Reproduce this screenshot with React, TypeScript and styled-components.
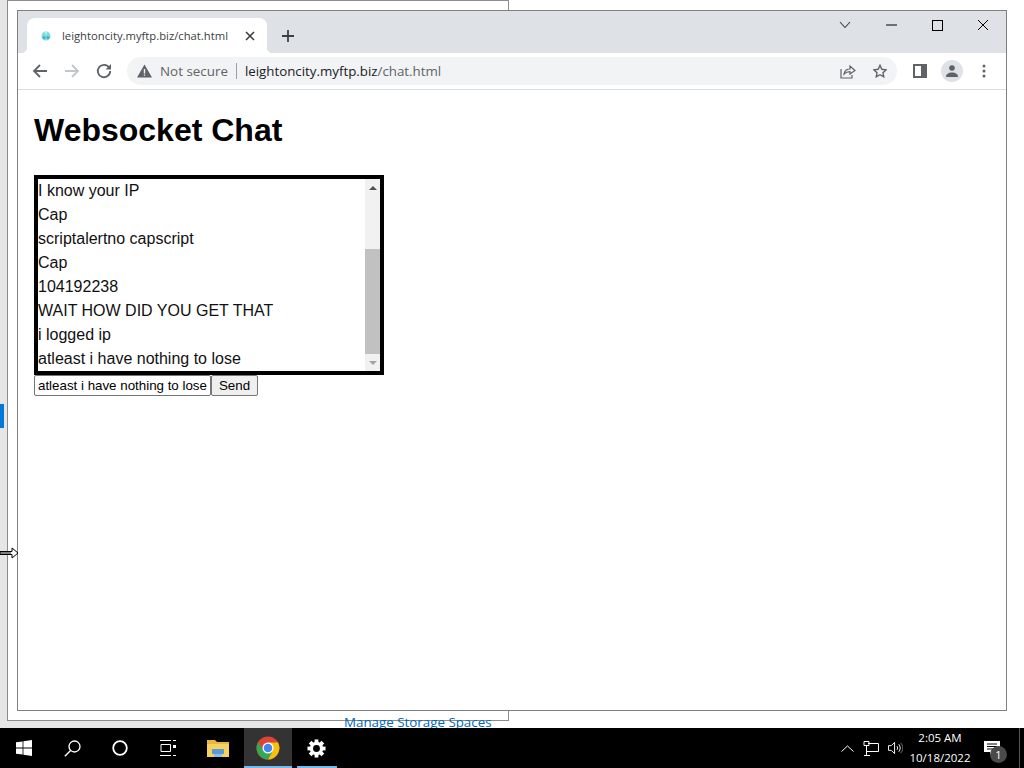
import React from 'react'
import styled, { createGlobalStyle } from 'styled-components'

const GlobalStyle = createGlobalStyle`
  html, body {
    margin: 0;
    padding: 0;
    background: #fff;
    overflow: hidden;
  }
`;

const Screen = styled.div`
  width: 1024px;
  height: 768px;
  display: flex;
  flex-direction: column;
  overflow: hidden;
  font-family: "Liberation Sans", Arial, sans-serif;
`;

const Desktop = styled.div`
  position: relative;
  height: 728px;
  background: #fff;
  overflow: hidden;
`;

const SettingsBehind = styled.div`
  position: absolute;
  left: 0;
  top: 0;
  width: 320px;
  height: 728px;
  background: #e6e6e6;
`;

const SelectedMark = styled.div`
  position: absolute;
  left: 0;
  top: 404px;
  width: 4px;
  height: 24px;
  background: #0078d7;
`;

const BackWindow = styled.div`
  position: absolute;
  left: 7px;
  top: 0;
  width: 500px;
  height: 719px;
  background: #fff;
  border: 1px solid #8c8c8c;
`;

const StorageLink = styled.a`
  position: absolute;
  left: 344px;
  top: 713px;
  font-family: "Open Sans", sans-serif;
  font-size: 13.35px;
  line-height: 18px;
  color: #0067b8;
  white-space: nowrap;
`;

const ChromeWindow = styled.div`
  position: absolute;
  left: 17px;
  top: 10px;
  width: 988px;
  height: 699px;
  background: #fff;
  border: 1px solid #808080;
  display: flex;
  flex-direction: column;
`;

const TabStrip = styled.div`
  height: 42px;
  flex: none;
  background: #dee1e6;
  display: flex;
  padding-left: 9px;
`;

const Tab = styled.div`
  position: relative;
  align-self: flex-end;
  width: 240px;
  height: 35px;
  box-sizing: border-box;
  background: #fff;
  border-radius: 8px 8px 0 0;
  display: flex;
  align-items: center;
  padding-left: 13px;
  &::after {
    content: '';
    position: absolute;
    right: -6px;
    bottom: 0;
    width: 6px;
    height: 6px;
    background: radial-gradient(circle at 100% 0, transparent 6px, #fff 6.5px);
  }
  &::before {
    content: '';
    position: absolute;
    left: -6px;
    bottom: 0;
    width: 6px;
    height: 6px;
    background: radial-gradient(circle at 0 0, transparent 6px, #fff 6.5px);
  }
`;

const TabTitle = styled.span`
  margin-left: 10px;
  width: 183px;
  font-family: "Open Sans", sans-serif;
  font-size: 11.25px;
  line-height: 16px;
  color: #3c4043;
  white-space: nowrap;
`;

const IconSlot = styled.span<{ $w?: number; $h?: number }>`
  flex: none;
  display: inline-flex;
  align-items: center;
  justify-content: center;
  width: ${p => p.$w ?? 28}px;
  height: ${p => p.$h ?? 28}px;
`;

const NewTab = styled(IconSlot)`
  align-self: flex-end;
  margin: 0 0 3px 7px;
`;

const Caption = styled.div`
  margin-left: auto;
  display: flex;
  align-items: center;
  height: 28px;
`;

const TabSearch = styled(IconSlot)`
  margin-right: 7px;
`;

const Toolbar = styled.div`
  height: 37px;
  flex: none;
  box-sizing: border-box;
  border-bottom: 1px solid #dadce0;
  display: flex;
  align-items: center;
  padding: 0 8px;
  gap: 4px;
`;

const Omnibox = styled.div`
  flex: 1;
  height: 28px;
  margin: 0 5px 0 5px;
  padding-left: 8px;
  background: #f1f3f4;
  border-radius: 14px;
  display: flex;
  align-items: center;
`;

const NotSecure = styled.span`
  margin-left: 7px;
  font-family: "Open Sans", sans-serif;
  font-size: 13.4px;
  color: #5f6368;
  white-space: nowrap;
`;

const Divider = styled.span`
  width: 1px;
  height: 16px;
  margin: 0 8px;
  background: #9aa0a6;
`;

const Url = styled.span`
  flex: 1;
  font-family: "Open Sans", sans-serif;
  font-size: 13.3px;
  color: #202124;
  white-space: nowrap;
  span {
    color: #5f6368;
  }
`;

const Avatar = styled.span`
  width: 22px;
  height: 22px;
  border-radius: 50%;
  background: #dee1e6;
  display: inline-flex;
  align-items: center;
  justify-content: center;
`;

const Page = styled.main`
  flex: 1;
  padding: 0 16px;
  color: #000;
`;

const Heading = styled.h1`
  margin: 22px 0 26px;
  font-size: 32px;
  line-height: 37px;
  font-weight: bold;
`;

const ChatBox = styled.div`
  width: 350px;
  height: 200px;
  box-sizing: border-box;
  border: 4px solid #000;
  display: flex;
`;

const Messages = styled.div`
  flex: 1;
  overflow: hidden;
`;

const Message = styled.div`
  height: 24px;
  font-size: 16px;
  line-height: 24px;
  color: #111;
  white-space: nowrap;
`;

const Scrollbar = styled.div`
  width: 15px;
  flex: none;
  background: #f1f1f1;
  display: flex;
  flex-direction: column;
  align-items: center;
`;

const ScrollArrow = styled.div<{ $down?: boolean; $muted?: boolean }>`
  height: 17px;
  flex: none;
  width: 100%;
  display: flex;
  align-items: center;
  justify-content: center;
  &::before {
    content: '';
    border-left: 4px solid transparent;
    border-right: 4px solid transparent;
    border-${p => (p.$down ? 'top' : 'bottom')}: 4px solid ${p => (p.$muted ? '#a3a3a3' : '#505050')};
  }
`;

const Thumb = styled.div`
  width: 100%;
  height: 105px;
  margin-top: 53px;
  background: #c1c1c1;
`;

const SendRow = styled.form`
  display: flex;
  margin: 0;
`;

const MessageInput = styled.input`
  width: 177px;
  height: 21px;
  box-sizing: border-box;
  padding: 1px 3px;
  margin: 0;
  border: 1px solid #767676;
  border-radius: 2px;
  background: #fff;
  color: #000;
  font-family: "Liberation Sans", Arial, sans-serif;
  font-size: 13.33px;
`;

const SendButton = styled.button`
  width: 47px;
  height: 21px;
  box-sizing: border-box;
  padding: 0;
  margin: 0;
  border: 1px solid #767676;
  border-radius: 2px;
  background: #efefef;
  color: #000;
  font-family: "Liberation Sans", Arial, sans-serif;
  font-size: 13.33px;
`;

const ResizeCursor = styled.svg`
  position: absolute;
  left: 0;
  top: 547px;
`;

const Taskbar = styled.footer`
  height: 40px;
  flex: none;
  background: #000;
  display: flex;
  align-items: stretch;
`;

const TaskButton = styled.div<{ $w?: number; $active?: boolean; $open?: boolean }>`
  position: relative;
  width: ${p => p.$w ?? 48}px;
  flex: none;
  display: flex;
  align-items: center;
  justify-content: center;
  background: ${p => (p.$active ? '#333' : 'transparent')};
  &::after {
    content: '';
    display: ${p => (p.$open ? 'block' : 'none')};
    position: absolute;
    left: ${p => (p.$active ? 0 : 5)}px;
    right: ${p => (p.$active ? 0 : 3)}px;
    bottom: 0;
    height: 2px;
    background: #76b9ed;
  }
`;

const Tray = styled.div`
  margin-left: auto;
  display: flex;
  align-items: center;
  color: #fff;
`;

const TrayIcon = styled(IconSlot)`
  height: 40px;
`;

const Clock = styled.div`
  width: 74px;
  text-align: center;
  font-family: "Open Sans", sans-serif;
  font-size: 11.5px;
  line-height: 20px;
  color: #fff;
  white-space: nowrap;
`;

const NotifyButton = styled.div`
  position: relative;
  width: 42px;
  height: 40px;
  display: flex;
  align-items: center;
  justify-content: center;
  padding-right: 12px;
  box-sizing: border-box;
`;

const NotifyBadge = styled.span`
  position: absolute;
  left: 13px;
  top: 18px;
  width: 17px;
  height: 17px;
  border-radius: 50%;
  background: #4a4a4a;
  color: #fff;
  font-family: "Open Sans", sans-serif;
  font-size: 11px;
  line-height: 17px;
  text-align: center;
`;

const ShowDesktop = styled.div`
  width: 4px;
  border-left: 1px solid #555;
  align-self: stretch;
`;

const messages = [
  'I know your IP',
  'Cap',
  'scriptalertno capscript',
  'Cap',
  '104192238',
  'WAIT HOW DID YOU GET THAT',
  'i logged ip',
  'atleast i have nothing to lose',
];

function ChromeLogo() {
  return (
    <svg width="24" height="24" viewBox="0 0 26 26">
      <circle cx="13" cy="13" r="12.5" fill="#db4437" />
      <path d="M13 25.5A12.5 12.5 0 0 0 23.8 7H13l4 7.5z" fill="#f4c20d" />
      <path d="M13 25.5l4.5-8-4.5-1-5-1-5.8-8.6A12.5 12.5 0 0 0 13 25.5z" fill="#34a853" />
      <circle cx="13" cy="13" r="6" fill="#fff" />
      <circle cx="13" cy="13" r="4.6" fill="#4285f4" />
    </svg>
  );
}

function Gear() {
  const teeth = [0, 45, 90, 135];
  return (
    <svg width="19" height="19" viewBox="0 0 20 20">
      {teeth.map(a => (
        <rect key={a} x="8" y="0.5" width="4" height="19" fill="#fff" transform={`rotate(${a} 10 10)`} />
      ))}
      <circle cx="10" cy="10" r="7" fill="#fff" />
      <circle cx="10" cy="10" r="3.6" fill="#000" />
    </svg>
  );
}

export default function App() {
  return (
    <Screen>
      <GlobalStyle />
      <Desktop>
        <SettingsBehind />
        <SelectedMark />
        <BackWindow />
        <StorageLink>Manage Storage Spaces</StorageLink>
        <ChromeWindow>
          <TabStrip>
            <Tab>
              <svg width="12" height="12" viewBox="0 0 12 12">
                <circle cx="6" cy="6" r="4.5" fill="#7fdde0" />
                <circle cx="4" cy="7.5" r="1.6" fill="#35b5c9" />
                <circle cx="8" cy="7.5" r="1.6" fill="#35b5c9" />
                <circle cx="6" cy="3" r="1.1" fill="#c8f2f2" />
              </svg>
              <TabTitle>leightoncity.myftp.biz/chat.html</TabTitle>
              <svg width="10" height="10" viewBox="0 0 10 10">
                <path d="M1 1l8 8M9 1l-8 8" stroke="#3c4043" strokeWidth="1.6" />
              </svg>
            </Tab>
            <NewTab>
              <svg width="14" height="14" viewBox="0 0 14 14">
                <path d="M7 1v12M1 7h12" stroke="#3c4043" strokeWidth="1.8" />
              </svg>
            </NewTab>
            <Caption>
              <TabSearch $w={32}>
                <svg width="12" height="8" viewBox="0 0 12 8">
                  <path d="M1 1l5 5.5L11 1" fill="none" stroke="#3c4043" strokeWidth="1.1" />
                </svg>
              </TabSearch>
              <IconSlot $w={46}>
                <svg width="11" height="2" viewBox="0 0 11 2">
                  <path d="M0 1h11" stroke="#000" strokeWidth="1" />
                </svg>
              </IconSlot>
              <IconSlot $w={46}>
                <svg width="11" height="11" viewBox="0 0 11 11">
                  <rect x="0.5" y="0.5" width="10" height="10" fill="none" stroke="#000" />
                </svg>
              </IconSlot>
              <IconSlot $w={46}>
                <svg width="12" height="12" viewBox="0 0 12 12">
                  <path d="M1 1l10 10M11 1L1 11" stroke="#000" strokeWidth="1" />
                </svg>
              </IconSlot>
            </Caption>
          </TabStrip>
          <Toolbar>
            <IconSlot>
              <svg width="16" height="16" viewBox="0 0 16 16">
                <path d="M15 8H2M8 2L2 8l6 6" fill="none" stroke="#5f6368" strokeWidth="1.8" />
              </svg>
            </IconSlot>
            <IconSlot>
              <svg width="16" height="16" viewBox="0 0 16 16">
                <path d="M1 8h13M8 2l6 6-6 6" fill="none" stroke="#c3c6c9" strokeWidth="1.8" />
              </svg>
            </IconSlot>
            <IconSlot>
              <svg width="16" height="16" viewBox="0 0 16 16">
                <path d="M13.3 4.8A6.2 6.2 0 1 0 14.2 8" fill="none" stroke="#5f6368" strokeWidth="1.8" />
                <path d="M15 1v5.4H9.6z" fill="#5f6368" />
              </svg>
            </IconSlot>
            <Omnibox>
              <IconSlot $w={18} $h={18}>
                <svg width="15" height="14" viewBox="0 0 15 14">
                  <path d="M7.5 0.5L15 13.5H0z" fill="#5f6368" />
                  <path d="M7.5 5v4.4M7.5 10.4v1.4" stroke="#f1f3f4" strokeWidth="1.4" />
                </svg>
              </IconSlot>
              <NotSecure>Not secure</NotSecure>
              <Divider />
              <Url>leightoncity.myftp.biz<span>/chat.html</span></Url>
              <IconSlot $w={32}>
                <svg width="16" height="15" viewBox="0 0 16 15">
                  <path d="M1 5v9h11v-3" fill="none" stroke="#5f6368" strokeWidth="1.2" />
                  <path d="M4 10c.6-3.2 3-5 6-5V2l5 4.5L10 10V7.6C7.6 7.6 5.6 8.4 4 10z" fill="none" stroke="#5f6368" strokeWidth="1.2" />
                </svg>
              </IconSlot>
              <IconSlot $w={32}>
                <svg width="14" height="14" viewBox="0 0 16 15">
                  <path d="M8 1l2.1 4.5 4.9.6-3.6 3.3.9 4.8L8 11.8l-4.3 2.4.9-4.8L1 6.1l4.9-.6z" fill="none" stroke="#5f6368" strokeWidth="1.6" />
                </svg>
              </IconSlot>
              <IconSlot $w={1} />
            </Omnibox>
            <IconSlot>
              <svg width="14" height="14" viewBox="0 0 14 14">
                <rect x="1" y="1" width="12" height="12" fill="none" stroke="#5f6368" strokeWidth="2" />
                <rect x="8" y="1" width="5" height="12" fill="#5f6368" />
              </svg>
            </IconSlot>
            <IconSlot>
              <Avatar>
                <svg width="12" height="12" viewBox="0 0 12 12">
                  <circle cx="6" cy="3" r="2.8" fill="#5f6368" />
                  <path d="M0 12c0-3 2.5-4.6 6-4.6S12 9 12 12z" fill="#5f6368" />
                </svg>
              </Avatar>
            </IconSlot>
            <IconSlot>
              <svg width="4" height="14" viewBox="0 0 4 14">
                <circle cx="2" cy="2" r="1.5" fill="#5f6368" />
                <circle cx="2" cy="7" r="1.5" fill="#5f6368" />
                <circle cx="2" cy="12" r="1.5" fill="#5f6368" />
              </svg>
            </IconSlot>
          </Toolbar>
          <Page>
            <Heading>Websocket Chat</Heading>
            <ChatBox>
              <Messages>
                {messages.map((m, i) => (
                  <Message key={i}>{m}</Message>
                ))}
              </Messages>
              <Scrollbar>
                <ScrollArrow />
                <Thumb />
                <ScrollArrow $down $muted />
              </Scrollbar>
            </ChatBox>
            <SendRow onSubmit={e => e.preventDefault()}>
              <MessageInput defaultValue="atleast i have nothing to lose" />
              <SendButton>Send</SendButton>
            </SendRow>
          </Page>
        </ChromeWindow>
        <ResizeCursor width="19" height="12" viewBox="0 0 19 12">
          <path d="M0 4.5h12V1l6 5-6 5V7.5H0z" fill="#fff" stroke="#000" strokeWidth="1" />
          <path d="M0 6h11" stroke="#000" strokeWidth="1" />
        </ResizeCursor>
      </Desktop>
      <Taskbar>
        <TaskButton>
          <svg width="16" height="16" viewBox="0 0 16 16">
            <path d="M0 2.3l6.6-.9v6.2H0zM7.4 1.3L16 0v7.6H7.4zM0 8.4h6.6v6.2L0 13.7zM7.4 8.4H16V16l-8.6-1.2z" fill="#fff" />
          </svg>
        </TaskButton>
        <TaskButton>
          <svg width="17" height="17" viewBox="0 0 17 17">
            <circle cx="10.5" cy="6.5" r="5.5" fill="none" stroke="#fff" strokeWidth="1.3" />
            <path d="M6.6 10.4L0.8 16.2" stroke="#fff" strokeWidth="1.4" />
          </svg>
        </TaskButton>
        <TaskButton>
          <svg width="16" height="16" viewBox="0 0 16 16">
            <circle cx="8" cy="8" r="6.8" fill="none" stroke="#fff" strokeWidth="1.8" />
          </svg>
        </TaskButton>
        <TaskButton>
          <svg width="16" height="16" viewBox="0 0 16 16">
            <path d="M0 .5h11M0 15.5h11M1 4.5h9.5v7H1zM13 .5h3M13 15.5h3" fill="none" stroke="#fff" strokeWidth="1" />
            <rect x="13" y="5" width="3" height="3" fill="#fff" />
          </svg>
        </TaskButton>
        <TaskButton $w={52}>
          <svg width="22" height="19" viewBox="0 0 22 19">
            <path d="M0 1h8l2 2h12v15H0z" fill="#e8b83e" />
            <path d="M0 5h22v13H0z" fill="#f5d25f" />
            <path d="M5 10h12v5H5z" fill="#5a9bd4" />
            <path d="M7 15h8v3H7z" fill="#8cbde4" />
          </svg>
        </TaskButton>
        <TaskButton $active $open>
          <ChromeLogo />
        </TaskButton>
        <TaskButton $open>
          <Gear />
        </TaskButton>
        <Tray>
          <TrayIcon $w={16}>
            <svg width="13" height="7" viewBox="0 0 13 7">
              <path d="M.5 6.5l6-5.5 6 5.5" fill="none" stroke="#fff" strokeWidth="1" />
            </svg>
          </TrayIcon>
          <TrayIcon $w={32}>
            <svg width="16" height="15" viewBox="0 0 16 15">
              <path d="M5 2.5h10.5v8H3M3 0.5h3v4H1v-4h2M3.5 4.5V14M1 14.5h6" fill="none" stroke="#fff" strokeWidth="1" />
            </svg>
          </TrayIcon>
          <TrayIcon $w={16}>
            <svg width="15" height="14" viewBox="0 0 16 14">
              <path d="M.5 4.5h3L7 1v12L3.5 9.5h-3z" fill="none" stroke="#fff" strokeWidth="1" />
              <path d="M9.5 5c1 1 1 3 0 4M11.5 3c2 2 2 6 0 8" fill="none" stroke="#fff" strokeWidth="1" />
              <path d="M13.5 1.5c3 3 3 8 0 11" fill="none" stroke="#777" strokeWidth="1" />
            </svg>
          </TrayIcon>
          <Clock>
            <div>2:05 AM</div>
            <div>10/18/2022</div>
          </Clock>
          <NotifyButton>
            <svg width="16" height="15" viewBox="0 0 16 15">
              <path d="M0 0h16v11h-7l-3 3v-3H0z" fill="#fff" />
              <path d="M3 3h10M3 5.5h10M3 8h10" stroke="#000" strokeWidth="1" />
            </svg>
            <NotifyBadge>1</NotifyBadge>
          </NotifyButton>
          <ShowDesktop />
        </Tray>
      </Taskbar>
    </Screen>
  )
}
